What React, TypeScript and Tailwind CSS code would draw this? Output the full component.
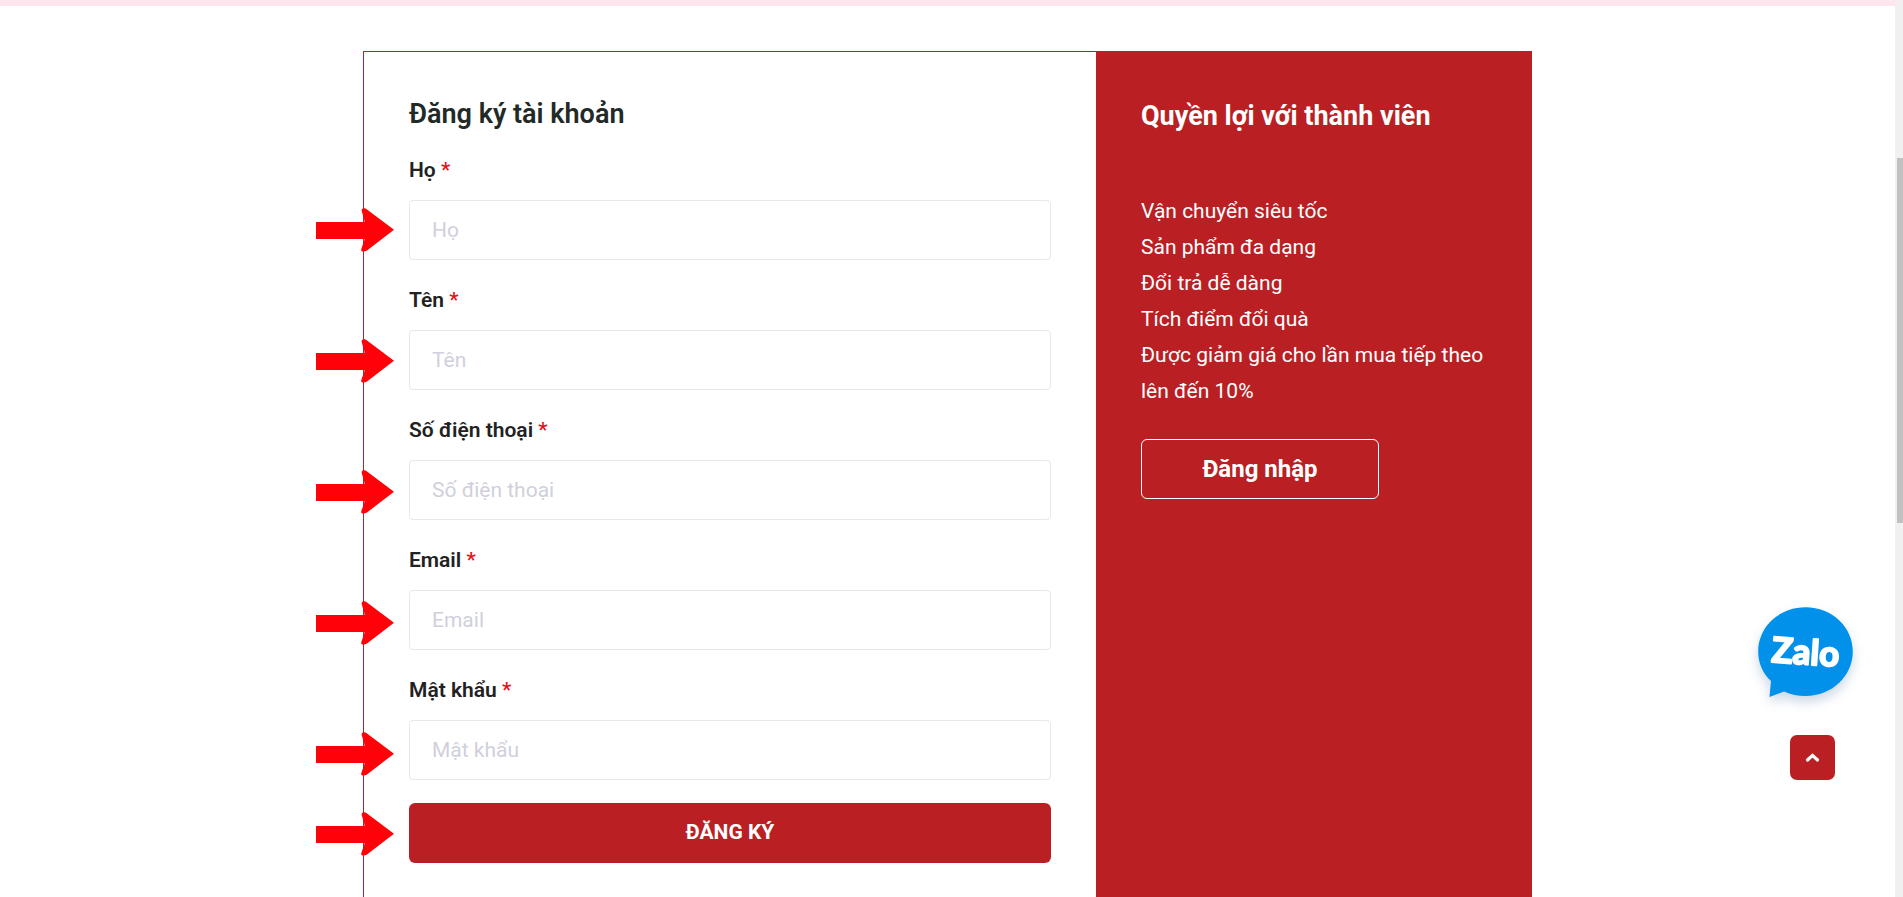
import React, { useState } from "react";

interface IField {
  name: string;
  label: string;
  type: string;
}

const fields: IField[] = [
  { name: "lastName", label: "Họ", type: "text" },
  { name: "firstName", label: "Tên", type: "text" },
  { name: "phone", label: "Số điện thoại", type: "tel" },
  { name: "email", label: "Email", type: "email" },
  { name: "password", label: "Mật khẩu", type: "password" },
];

const benefits = [
  "Vận chuyển siêu tốc",
  "Sản phẩm đa dạng",
  "Đổi trả dễ dàng",
  "Tích điểm đổi quà",
  "Được giảm giá cho lần mua tiếp theo lên đến 10%",
];

const Arrow = () => (
  <svg width="78" height="44" viewBox="0 0 78 44" fill="#ff0209" aria-hidden="true">
    <path d="M0 14H48.500C48.500 10 46.500 7 45.700 3C45.300 0.500 47.500-0.300 50 0.800L78 21.700L51 42.500C48 44.400 44.700 43.700 45.200 41.500C46 38 48.500 34 48.500 31H0Z" />
  </svg>
);

const ZaloBubble = () => (
  <svg width="95" height="90" viewBox="0 0 95 90" className="overflow-visible drop-shadow-[0_6px_6px_rgba(0,60,130,0.2)]">
    <path
      fill="#0190ea"
      d="M47.500 0.300C74 0.300 94.800 20 94.800 44.500C94.800 69 74 89 47.500 89C40 89 33 87.500 26 84.500L11.500 90L13 74C4.500 66 0.200 56 0.200 44.500C0.200 20 21 0.300 47.500 0.300Z"
    />
    <text
      x="13"
      y="55"
      transform="rotate(4 13 55)"
      fill="#fff"
      stroke="#fff"
      strokeWidth="2"
      strokeLinejoin="round"
      className="font-['Lato',sans-serif] text-[35px] font-bold"
    >
      Zalo
    </text>
  </svg>
);

const App = () => {
  const [formData, setFormData] = useState<Record<string, string>>({});

  const handleChange = (e: React.ChangeEvent<HTMLInputElement>): void => {
    const { name, value } = e.target;
    setFormData((prev) => ({ ...prev, [name]: value }));
  };

  return (
    <div className="flex h-screen overflow-hidden bg-white font-['Roboto',sans-serif] text-[#222]">
      <main className="relative flex min-w-0 flex-1 flex-col">
        <div className="h-[6px] shrink-0 bg-[#ffe6ee]" />

        <section className="relative mx-auto mt-[45px] flex w-full max-w-[1169px] flex-1 border-t border-l border-[#a12b30]">
          <form className="min-w-0 flex-1 px-[45px] pt-11" onSubmit={(e) => e.preventDefault()}>
            <h1 className="text-[27px] leading-9 font-semibold text-[#222a27]">Đăng ký tài khoản</h1>

            <div className="mt-[23px] grid gap-[25px]">
              {fields.map((field) => (
                <div key={field.name}>
                  <label htmlFor={field.name} className="mb-[15px] block text-[21px] leading-[30px] font-semibold">
                    {field.label} <span className="font-medium text-[#e5121b]">*</span>
                  </label>
                  <input
                    id={field.name}
                    name={field.name}
                    type={field.type}
                    value={formData[field.name] ?? ""}
                    onChange={handleChange}
                    placeholder={field.label}
                    className="block h-[60px] w-full rounded-[4px] border border-[#e8e8ea] px-[22px] text-[21px] placeholder:text-[#cfd0dc] focus:outline-none focus:border-slate-400"
                  />
                </div>
              ))}
            </div>

            <button
              type="submit"
              className="mt-[23px] h-[60px] w-full rounded-[6px] bg-[#ba2023] text-[21px] font-bold text-white"
            >
              ĐĂNG KÝ
            </button>
          </form>

          <aside className="w-[436px] shrink-0 bg-[#ba2023] px-[45px] pt-[46px] text-white">
            <h2 className="text-[27px] leading-9 font-bold">Quyền lợi với thành viên</h2>
            <ul className="mt-[59px] text-[21px] leading-9">
              {benefits.map((item) => (
                <li key={item}>{item}</li>
              ))}
            </ul>
            <button
              type="button"
              className="mt-[30px] h-[60px] w-[238px] rounded-[6px] border border-white text-[24px] font-bold"
            >
              Đăng nhập
            </button>
          </aside>

          {/* step markers over the left edge of the form */}
          <div className="pointer-events-none absolute top-[156px] -left-12">
            <div className="grid gap-[87px]">
              {fields.map((field) => (
                <Arrow key={field.name} />
              ))}
            </div>
            <div className="mt-9">
              <Arrow />
            </div>
          </div>
        </section>

        <div className="absolute right-[42px] bottom-[117px] flex flex-col items-end gap-[38px]">
          <a href="#zalo" aria-label="Zalo">
            <ZaloBubble />
          </a>
          <button
            type="button"
            aria-label="Lên đầu trang"
            className="mr-[18px] flex size-[45px] items-center justify-center rounded-[7px] bg-[#ba2023]"
          >
            <svg width="15" height="10" viewBox="0 0 15 10" fill="none" stroke="#fff" strokeWidth="3.200" strokeLinecap="round" strokeLinejoin="round">
              <path d="M2.500 7L7.500 2.300L12.500 7" />
            </svg>
          </button>
        </div>
      </main>

      <div className="w-2 shrink-0 bg-[#f0f0f0] pt-[158px] pl-[2px]" aria-hidden="true">
        <div className="h-[365px] bg-[#c1c1c1]" />
      </div>
    </div>
  );
};

export default App;
